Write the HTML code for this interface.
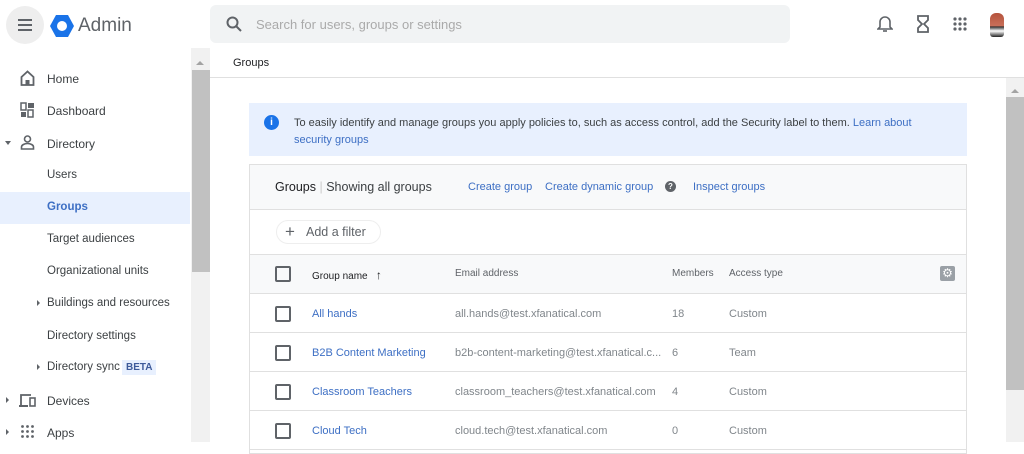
<!DOCTYPE html>
<html><head><meta charset="utf-8"><style>
*{box-sizing:border-box;margin:0;padding:0}
body{width:1024px;height:442px;overflow:hidden;background:#fff;font-family:"Liberation Sans",Arial,sans-serif;color:#3c4043;position:relative}
.a{position:absolute}
.nav{font-size:12px;color:#3c4043}
.sub{font-size:11.5px}
.lnk{color:#3d6fc4}
.cb{position:absolute;width:16px;height:16px;border:2px solid #5f6368;border-radius:2px}
.row{position:absolute;left:250px;width:716px;height:39px;border-bottom:1px solid #e0e0e0;font-size:11px;color:#80868b}
.row span{position:absolute;top:14px}
</style></head><body>
<div class="a" style="left:6px;top:6px;width:38px;height:38px;border-radius:50%;background:#eeeeee"></div>
<div class="a" style="left:18px;top:19px;width:14px;height:2px;background:#5f6368;box-shadow:0 5px 0 #5f6368,0 10px 0 #5f6368"></div>
<svg class="a" style="left:49px;top:14px" width="26" height="24" viewBox="0 0 26 24"><polygon points="7,1 19,1 25,12 19,23 7,23 1,12" fill="#1a73e8"/><circle cx="13" cy="12" r="5" fill="#fff"/></svg>
<div class="a" style="left:78px;top:15px;font-size:19px;color:#5f6368">Admin</div>
<div class="a" style="left:210px;top:5px;width:580px;height:38px;background:#f1f3f4;border-radius:6px"></div>
<svg class="a" style="left:226px;top:16px" width="16" height="16" viewBox="0 0 16 16"><circle cx="6.5" cy="6.5" r="5" fill="none" stroke="#5f6368" stroke-width="2"/><line x1="10" y1="10" x2="15" y2="15" stroke="#5f6368" stroke-width="2"/></svg>
<div class="a" style="left:256px;top:17px;font-size:13px;color:#aaa">Search for users, groups or settings</div>
<svg class="a" style="left:877px;top:15px" width="16" height="18" viewBox="0 0 16 18"><path d="M8 2a5 5 0 0 0-5 5v5l-2 2h14l-2-2V7a5 5 0 0 0-5-5z" fill="none" stroke="#5f6368" stroke-width="1.6"/><path d="M6 16h4" stroke="#5f6368" stroke-width="1.6"/></svg>
<svg class="a" style="left:916px;top:15px" width="14" height="18" viewBox="0 0 14 18"><path d="M2 1h10v4l-4 4 4 4v4H2v-4l4-4-4-4z" fill="none" stroke="#5f6368" stroke-width="1.8"/></svg>
<svg class="a" style="left:953px;top:17px" width="14" height="14" viewBox="0 0 14 14" fill="#5f6368"><circle cx="2" cy="2" r="1.6"/><circle cx="7" cy="2" r="1.6"/><circle cx="12" cy="2" r="1.6"/><circle cx="2" cy="7" r="1.6"/><circle cx="7" cy="7" r="1.6"/><circle cx="12" cy="7" r="1.6"/><circle cx="2" cy="12" r="1.6"/><circle cx="7" cy="12" r="1.6"/><circle cx="12" cy="12" r="1.6"/></svg>
<div class="a" style="left:990px;top:13px;width:14px;height:24px;border-radius:6px 6px 3px 3px;background:linear-gradient(#b5533c 0,#c9705a 55%,#222 56%,#fff 75%,#222 100%)"></div>
<div class="a" style="left:0;top:192px;width:190px;height:32px;background:#e8f0fe"></div>
<svg class="a" style="left:20px;top:70px" width="15" height="16" viewBox="0 0 15 16"><path d="M1.5 7L7.5 1.5 13.5 7v8h-12z" fill="none" stroke="#5f6368" stroke-width="1.8"/><rect x="5.5" y="10" width="4" height="5" fill="#5f6368"/></svg>
<svg class="a" style="left:20px;top:102px" width="15" height="16" viewBox="0 0 15 16" fill="#5f6368"><rect x="1" y="1" width="5" height="7" fill="none" stroke="#5f6368" stroke-width="1.5"/><rect x="8" y="1" width="6" height="5"/><rect x="1" y="10" width="5" height="5"/><rect x="8" y="8" width="5" height="7" fill="none" stroke="#5f6368" stroke-width="1.5"/></svg>
<div class="a" style="left:5px;top:141px;border:3.5px solid transparent;border-top:4px solid #5f6368"></div>
<svg class="a" style="left:20px;top:135px" width="15" height="15" viewBox="0 0 15 15"><circle cx="7.5" cy="4" r="3" fill="none" stroke="#5f6368" stroke-width="1.6"/><path d="M1.5 14v-2c0-2 3-3.5 6-3.5s6 1.5 6 3.5v2z" fill="none" stroke="#5f6368" stroke-width="1.6"/></svg>
<div class="a nav" style="left:47px;top:72px">Home</div>
<div class="a nav" style="left:47px;top:104px">Dashboard</div>
<div class="a nav" style="left:47px;top:137px">Directory</div>
<div class="a nav sub" style="left:47px;top:169px">Users</div>
<div class="a nav sub" style="left:47px;top:201px;color:#3d6fc4;font-weight:bold">Groups</div>
<div class="a nav sub" style="left:47px;top:233px">Target audiences</div>
<div class="a nav sub" style="left:47px;top:265px">Organizational units</div>
<div class="a" style="left:37px;top:300px;border:3px solid transparent;border-left:3.5px solid #5f6368"></div>
<div class="a nav sub" style="left:47px;top:297px">Buildings and resources</div>
<div class="a nav sub" style="left:47px;top:330px">Directory settings</div>
<div class="a" style="left:37px;top:364px;border:3px solid transparent;border-left:3.5px solid #5f6368"></div>
<div class="a nav sub" style="left:47px;top:361px">Directory sync</div>
<div class="a" style="left:122px;top:360px;padding:2px 4px;background:#e8f0fe;color:#3d5a9a;font-size:10px;font-weight:bold">BETA</div>
<div class="a" style="left:6px;top:397px;border:3px solid transparent;border-left:3.5px solid #5f6368"></div>
<svg class="a" style="left:18px;top:393px" width="18" height="15" viewBox="0 0 18 15"><path d="M3 12V2h10" fill="none" stroke="#5f6368" stroke-width="1.8"/><path d="M1 13h9" stroke="#5f6368" stroke-width="2"/><rect x="12" y="5" width="5" height="8" fill="none" stroke="#5f6368" stroke-width="1.6"/></svg>
<div class="a nav" style="left:47px;top:394px">Devices</div>
<div class="a" style="left:6px;top:429px;border:3px solid transparent;border-left:3.5px solid #5f6368"></div>
<svg class="a" style="left:21px;top:425px" width="13" height="13" viewBox="0 0 13 13" fill="#5f6368"><circle cx="1.5" cy="1.5" r="1.4"/><circle cx="6.5" cy="1.5" r="1.4"/><circle cx="11.5" cy="1.5" r="1.4"/><circle cx="1.5" cy="6.5" r="1.4"/><circle cx="6.5" cy="6.5" r="1.4"/><circle cx="11.5" cy="6.5" r="1.4"/><circle cx="1.5" cy="11.5" r="1.4"/><circle cx="6.5" cy="11.5" r="1.4"/><circle cx="11.5" cy="11.5" r="1.4"/></svg>
<div class="a nav" style="left:47px;top:426px">Apps</div>
<div class="a" style="left:191px;top:48px;width:19px;height:394px;background:#f1f1f1"></div>
<div class="a" style="left:192px;top:70px;width:18px;height:202px;background:#c1c1c1"></div>
<div class="a" style="left:196px;top:57px;border:4px solid transparent;border-bottom:4px solid #a3a3a3"></div>
<div class="a" style="left:233px;top:57px;font-size:11px;color:#202124">Groups</div>
<div class="a" style="left:210px;top:77px;width:814px;height:1px;background:#e0e0e0"></div>
<div class="a" style="left:1006px;top:78px;width:18px;height:364px;background:#f1f1f1"></div>
<div class="a" style="left:1006px;top:97px;width:18px;height:293px;background:#c1c1c1"></div>
<div class="a" style="left:1011px;top:85px;border:4px solid transparent;border-bottom:4px solid #a3a3a3"></div>
<div class="a" style="left:249px;top:103px;width:718px;height:53px;background:#e8f0fe"></div>
<div class="a" style="left:264px;top:115px;width:15px;height:15px;border-radius:50%;background:#1a73e8;color:#fff;font-size:10px;font-weight:bold;text-align:center;line-height:15px">i</div>
<div class="a" style="left:294px;top:115px;width:640px;font-size:11px;line-height:17px;color:#3c4043">To easily identify and manage groups you apply policies to, such as access control, add the Security label to them. <span class="lnk">Learn about<br>security groups</span></div>
<div class="a" style="left:249px;top:164px;width:718px;height:290px;border:1px solid #e0e0e0"></div>
<div class="a" style="left:250px;top:165px;width:716px;height:45px;background:#f8f9fa;border-bottom:1px solid #e0e0e0"></div>
<div class="a" style="left:275px;top:180px;font-size:12.5px;color:#202124">Groups <span style="color:#ccc">|</span> <span style="color:#3c4043">Showing all groups</span></div>
<div class="a lnk" style="left:468px;top:181px;font-size:11px">Create group</div>
<div class="a lnk" style="left:545px;top:181px;font-size:11px">Create dynamic group</div>
<div class="a" style="left:665px;top:181px;width:11px;height:11px;border-radius:50%;background:#5f6368;color:#fff;font-size:8px;font-weight:bold;text-align:center;line-height:11px">?</div>
<div class="a lnk" style="left:693px;top:181px;font-size:11px">Inspect groups</div>
<div class="a" style="left:276px;top:220px;width:105px;height:24px;border:1px solid #eee;border-radius:12px"></div>
<div class="a" style="left:285px;top:222px;font-size:17px;color:#5f6368">+</div>
<div class="a" style="left:306px;top:225px;font-size:12.5px;color:#5f6368">Add a filter</div>
<div class="a" style="left:250px;top:254px;width:716px;height:40px;background:#f8f9fa;border-top:1px solid #e0e0e0;border-bottom:1px solid #e0e0e0"></div>
<div class="cb" style="left:275px;top:266px"></div>
<div class="a" style="left:312px;top:268px;font-size:10px;color:#202124">Group name &nbsp;&nbsp;<b style="font-size:12px">↑</b></div>
<div class="a" style="left:455px;top:268px;font-size:10px;color:#5f6368">Email address</div>
<div class="a" style="left:672px;top:268px;font-size:10px;color:#5f6368">Members</div>
<div class="a" style="left:729px;top:268px;font-size:10px;color:#5f6368">Access type</div>
<div class="a" style="left:940px;top:266px;width:15px;height:15px;background:#9aa0a6;border-radius:2px;color:#fff;font-size:12px;text-align:center;line-height:15px">⚙</div>
<div class="row" style="top:294px"><span style="left:62px;color:#3d6fc4">All hands</span><span style="left:205px">all.hands@test.xfanatical.com</span><span style="left:422px">18</span><span style="left:479px">Custom</span></div>
<div class="row" style="top:333px"><span style="left:62px;color:#3d6fc4">B2B Content Marketing</span><span style="left:205px">b2b-content-marketing@test.xfanatical.c...</span><span style="left:422px">6</span><span style="left:479px">Team</span></div>
<div class="row" style="top:372px"><span style="left:62px;color:#3d6fc4">Classroom Teachers</span><span style="left:205px">classroom_teachers@test.xfanatical.com</span><span style="left:422px">4</span><span style="left:479px">Custom</span></div>
<div class="row" style="top:411px"><span style="left:62px;color:#3d6fc4">Cloud Tech</span><span style="left:205px">cloud.tech@test.xfanatical.com</span><span style="left:422px">0</span><span style="left:479px">Custom</span></div>
<div class="cb" style="left:275px;top:306px"></div>
<div class="cb" style="left:275px;top:345px"></div>
<div class="cb" style="left:275px;top:384px"></div>
<div class="cb" style="left:275px;top:423px"></div>
</body></html>
